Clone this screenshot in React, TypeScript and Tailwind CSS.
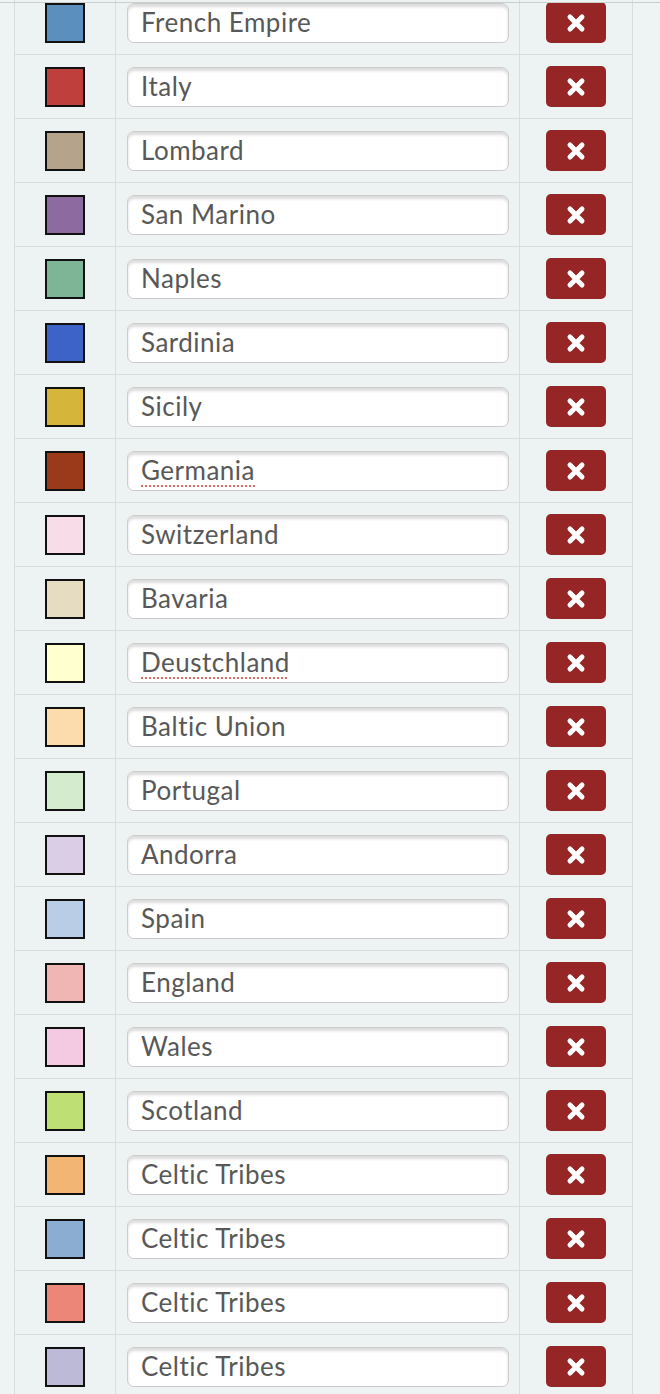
const rows: { color: string; name: string; misspelled?: boolean }[] = [
  { color: '#5b8fbd', name: 'French Empire' },
  { color: '#bf3f3c', name: 'Italy' },
  { color: '#b5a48b', name: 'Lombard' },
  { color: '#8d6aa0', name: 'San Marino' },
  { color: '#7fb597', name: 'Naples' },
  { color: '#3d63c8', name: 'Sardinia' },
  { color: '#d6b63a', name: 'Sicily' },
  { color: '#9a3a1a', name: 'Germania', misspelled: true },
  { color: '#f8dce8', name: 'Switzerland' },
  { color: '#e6dcc1', name: 'Bavaria' },
  { color: '#ffffd0', name: 'Deustchland', misspelled: true },
  { color: '#fcdbac', name: 'Baltic Union' },
  { color: '#d5ebcd', name: 'Portugal' },
  { color: '#dccde6', name: 'Andorra' },
  { color: '#b9cde6', name: 'Spain' },
  { color: '#f0b6b4', name: 'England' },
  { color: '#f3cae2', name: 'Wales' },
  { color: '#bedf74', name: 'Scotland' },
  { color: '#f2b573', name: 'Celtic Tribes' },
  { color: '#8aadd1', name: 'Celtic Tribes' },
  { color: '#ec8678', name: 'Celtic Tribes' },
  { color: '#bdbad8', name: 'Celtic Tribes' },
]

function CloseIcon() {
  return (
    <svg width="20" height="20" viewBox="0 0 20 20" fill="none" xmlns="http://www.w3.org/2000/svg">
      <path d="M4 4L16 16M16 4L4 16" stroke="white" strokeWidth="5" strokeLinecap="round" />
    </svg>
  )
}

export default function App() {
  return (
    <div className="min-h-[1394px] overflow-hidden bg-[#eef4f4] font-['Lato',sans-serif]">
      <div className="h-[2px]" />
      <div className="relative z-10 h-px bg-[#c9cfcf]" />
      <div className="ml-[14px] mt-[-13px] w-[619px] border-x border-[#d8dede]">
        {rows.map((row, i) => (
          <div key={i} className="flex h-[64px] border-t border-[#d8dede] bg-[#edf3f3]">
            <div className="flex w-[101px] items-center justify-center border-r border-[#d8dede]">
              <div
                className="h-[40px] w-[40px] border-2 border-[#111]"
                style={{ backgroundColor: row.color }}
              />
            </div>
            <div className="flex w-[404px] items-center border-r border-[#d8dede] pl-[11px]">
              <div className="flex h-[40px] w-[382px] items-center rounded-[7px] border border-[#cccccc] bg-white pl-[13px] text-[26px] tracking-[0.5px] text-[#585858] shadow-[inset_0_3px_3px_rgba(0,0,0,0.14)] [font-variant-ligatures:none]">
                <span
                  className={
                    row.misspelled
                      ? 'underline decoration-[#d9706c] decoration-dotted decoration-2 underline-offset-[5px]'
                      : ''
                  }
                >
                  {row.name}
                </span>
              </div>
            </div>
            <div className="flex flex-1 items-center justify-center">
              <button className="flex h-[41px] w-[60px] items-center justify-center rounded-[5px] bg-[#962626]">
                <CloseIcon />
              </button>
            </div>
          </div>
        ))}
      </div>
    </div>
  )
}
